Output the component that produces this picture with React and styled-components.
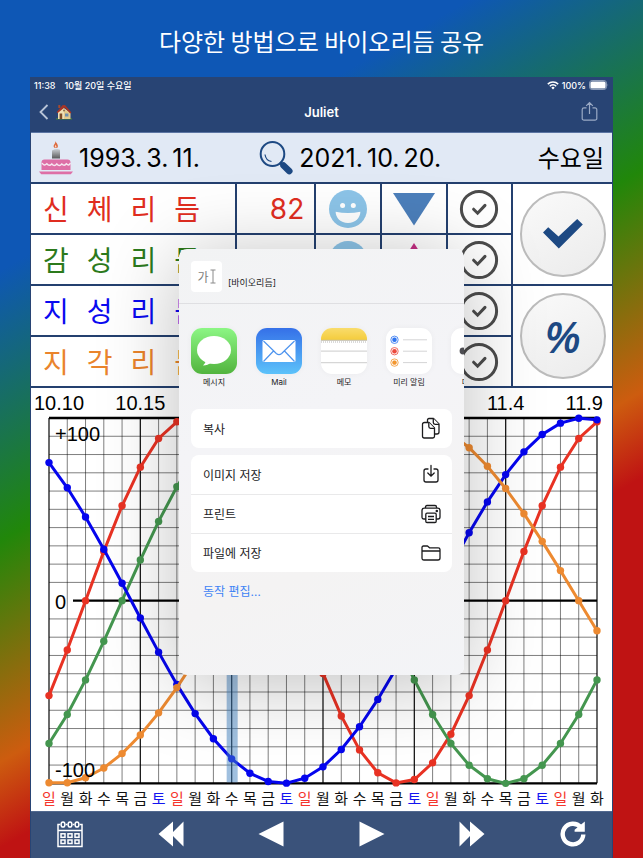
import React, { useState } from "react";
import styled, { createGlobalStyle } from "styled-components";

const NAVY = "#284474";
const LINE = "#24406f";

const GlobalStyle = createGlobalStyle`
  * {
    box-sizing: border-box;
  }
  body {
    margin: 0;
    font-family: Inter, "Noto Sans CJK KR", sans-serif;
    color: #000;
  }
  button {
    padding: 0;
    border: 0;
    background: none;
    font: inherit;
    color: inherit;
    cursor: pointer;
  }
  svg {
    display: block;
  }
`;

const Page = styled.main`
  min-height: 100vh;
  padding: 0 30px;
  background: linear-gradient(
    150deg,
    #0e57b5 22%,
    #21870a 44%,
    #cd5c0f 62%,
    #bf1313 69%
  );
`;
const Headline = styled.h1`
  margin: 0;
  padding-top: 4px;
  height: 77px;
  display: flex;
  align-items: center;
  justify-content: center;
  font-family: "Noto Sans CJK KR", sans-serif;
  font-size: 24px;
  font-weight: 400;
  color: #fff;
`;
const Screen = styled.section`
  position: relative;
  border: 1px solid ${NAVY};
  border-width: 0 1px;
  background: #fff;
  overflow: hidden;
`;
const StatusBar = styled.div`
  display: flex;
  align-items: center;
  justify-content: space-between;
  height: 16px;
  padding: 0 3px;
  background: ${NAVY};
  color: #fff;
  font-size: 9px;
  font-weight: 500;
`;
const StatusGroup = styled.div`
  display: flex;
  align-items: center;
  gap: ${(p) => p.$gap}px;
`;
const NavBar = styled.header`
  display: grid;
  grid-template-columns: 1fr auto 1fr;
  align-items: center;
  height: 40px;
  padding: 0 14px 2px 8px;
  background: ${NAVY};
  border-bottom: 1px solid #5b75a3;
`;
const NavTitle = styled.h2`
  margin: 0;
  padding-left: 6px;
  font-size: 13px;
  font-weight: 600;
  color: #fff;
`;
const BackButton = styled.button`
  display: flex;
  align-items: center;
  gap: 7px;
  justify-self: start;
`;
const ShareButton = styled.button`
  justify-self: end;
`;
const DateRow = styled.div`
  display: flex;
  align-items: center;
  height: 49px;
  padding: 0 8px;
  background: #e1e9f5;
`;
const DateButton = styled.button`
  display: flex;
  align-items: center;
  gap: 6px;
  width: ${(p) => p.$width};
  white-space: nowrap;
`;
const DateText = styled.span`
  display: flex;
  gap: 4px;
  font-size: 25px;
`;
const Weekday = styled.span`
  margin-left: auto;
  padding-bottom: 2px;
  font-family: "Noto Sans CJK KR", sans-serif;
  font-size: 24px;
`;

const RhythmTable = styled.table`
  width: 100%;
  table-layout: fixed;
  border-collapse: separate;
  border-spacing: 0;
  border-top: 2px solid ${LINE};
`;
const Cell = styled.td`
  height: 51px;
  padding: 0;
  border-bottom: 2px solid ${LINE};
  border-right: ${(p) => (p.$last ? "0" : `2px solid ${LINE}`)};
  svg {
    margin: 0 auto;
  }
`;
const NameCell = styled(Cell).attrs({ as: "th", scope: "row" })`
  font-weight: 400;
`;
const RhythmName = styled.div`
  display: flex;
  gap: 18px;
  padding: 0 0 2px 12px;
  font-family: "Noto Sans CJK KR", sans-serif;
  font-size: 28px;
  line-height: 40px;
  color: ${(p) => p.color};
`;
const ValueCell = styled(Cell)`
  padding-right: 10px;
  text-align: right;
  font-size: 28px;
  color: ${(p) => p.color};
`;
const ToggleButton = styled.button`
  display: block;
  margin: 0 auto;
  opacity: ${(p) => (p.$on ? 1 : 0.4)};
`;
const RoundButton = styled.button`
  display: flex;
  align-items: center;
  justify-content: center;
  width: 86px;
  height: 86px;
  margin: 0 auto;
  border: 2px solid #bcbcbc;
  border-radius: 50%;
  background: linear-gradient(150deg, #fafafa, #ebebeb);
  font-family: "Open Sans", sans-serif;
  font-size: 44px;
  font-style: italic;
  font-weight: 600;
  line-height: 1;
  color: #1d4983;
`;
const ChartSvg = styled.svg`
  width: 100%;
  height: auto;
  font-family: "Liberation Sans", "Noto Sans CJK KR", sans-serif;
  font-size: 20px;
`;
const DayText = styled.text`
  font-family: "Noto Sans CJK KR", sans-serif;
  font-size: 15px;
`;

const Toolbar = styled.nav`
  display: flex;
  align-items: center;
  justify-content: space-between;
  height: 47px;
  margin: 0 -1px;
  padding: 0 27px 2px;
  background: #3a527a;
  border-top: 1px solid #52698f;
`;

const Sheet = styled.div`
  position: absolute;
  top: 172px;
  left: 0;
  right: 0;
  width: 285px;
  height: 426px;
  margin: 0 auto;
  border-radius: 8px;
  background: linear-gradient(160deg, #f2f3f4, #f4f4f7 40%, #f4f3f3 70%, #f3f4f7);
  box-shadow: 0 8px 80px rgba(0, 0, 0, 0.26);
  overflow: hidden;
  color: #1c1c1e;
`;
const SheetHeader = styled.div`
  display: flex;
  align-items: center;
  gap: 6px;
  height: 55px;
  padding: 0 12px;
  border-bottom: 1px solid #dfdfe2;
`;
const Preview = styled.div`
  display: flex;
  align-items: center;
  justify-content: center;
  gap: 1px;
  width: 31px;
  height: 31px;
  border-radius: 4px;
  background: #fff;
  font-size: 12px;
  color: #7d7d7d;
`;
const SheetTitle = styled.span`
  padding-top: 12px;
  font-size: 9px;
`;
const Apps = styled.div`
  display: flex;
  gap: 19px;
  padding: 24px 0 0 12px;
`;
const AppButton = styled.button`
  flex: 0 0 auto;
  width: 46px;
  font-size: 8px;
  line-height: 16px;
  white-space: nowrap;
`;
const AppTile = styled.span`
  display: block;
  width: 46px;
  height: 46px;
  border-radius: 11px;
  overflow: hidden;
  background: #fff;
  box-shadow: 0 0 6px rgba(0, 0, 0, 0.04);
`;
const ActionGroup = styled.div`
  margin: ${(p) => p.$top}px 12px 0;
  border-radius: 8px;
  background: #fff;
  overflow: hidden;
`;
const Action = styled.button`
  display: flex;
  align-items: center;
  justify-content: space-between;
  width: 100%;
  height: 39px;
  padding: 0 11px 1px 12px;
  font-size: 12px;
  & + & {
    border-top: 1px solid #e9e9ea;
  }
`;
const EditLink = styled.a`
  display: block;
  width: max-content;
  margin: 10px 24px;
  font-size: 12px;
  line-height: 20px;
  color: #3f83f5;
  text-decoration: none;
`;

const rhythms = [
  { name: "신체리듬", color: "#e02d20", stroke: "#e83223", period: 23, phase: -2, up: false },
  { name: "감성리듬", color: "#2c7a1c", stroke: "#44964f", period: 28, phase: -4, up: true },
  { name: "지성리듬", color: "#0a0af0", stroke: "#0505ee", period: 33, phase: 12, up: false },
  { name: "지각리듬", color: "#ea842c", stroke: "#ed8a31", period: 38, phase: 28, up: true },
];

const TODAY = 10;
const levelAt = (r, day) => Math.sin((2 * Math.PI * (day + r.phase)) / r.period);

/* icons */
const Wifi = () => (
  <svg width="12" height="9" viewBox="0 0 12 9" fill="none" stroke="#fff" strokeWidth="1.5">
    <path d="M.8 3.1a7.4 7.4 0 0 1 10.4 0" />
    <path d="M2.8 5.2a4.5 4.5 0 0 1 6.4 0" />
    <path d="M4.3 6.7a2.4 2.4 0 0 1 3.4 0L6 8.4z" fill="#fff" stroke="none" />
  </svg>
);
const Battery = () => (
  <svg width="20" height="10" viewBox="0 0 20 10">
    <rect x=".5" y=".5" width="17" height="9" rx="2.6" fill="none" stroke="#8b9bb8" />
    <rect x="1.4" y="1.4" width="15.2" height="7.2" rx="1.6" fill="#fff" />
    <path d="M18.6 3.4q1.2 1.6 0 3.2z" fill="#8b9bb8" />
  </svg>
);
const House = () => (
  <svg width="16" height="16" viewBox="0 0 16 16">
    <path d="M0 14.4h16v1H0z" fill="#4c8a33" />
    <path d="M2 8l5-4.6L13.5 8v7H2z" fill="#f0dfb4" />
    <path d="M8 5l6.5 4v6H8z" fill="#e3c98d" />
    <path d="M2.3 1h2v3h-2z" fill="#a5492f" />
    <path d="M.6 8.2L6.5 1.3 9 1l6.4 7.6-1.2.8L8.6 3.6 1.7 9z" fill="#a83425" />
    <path d="M3.6 9.5h2.6V15H3.6z" fill="#7d4a26" />
    <path d="M9 9.5h3.4v3H9z" fill="#6f8fae" />
    <circle cx="8" cy="6.6" r="1" fill="#8a6a4a" />
  </svg>
);
const Share = () => (
  <svg width="17" height="21" viewBox="0 0 17 21" fill="none" stroke="#9aaac5" strokeWidth="1.2">
    <path d="M5.5 6.8H3A1.8 1.8 0 0 0 1.2 8.6v8.8A1.8 1.8 0 0 0 3 19.2h11a1.8 1.8 0 0 0 1.8-1.8V8.6A1.8 1.8 0 0 0 14 6.8h-2.5M8.5 13V1.5M5.2 4.8l3.3-3.3 3.3 3.3" />
  </svg>
);
const Cake = () => (
  <svg width="34" height="36" viewBox="0 0 34 36">
    <defs>
      <linearGradient id="candle" x1="0" y1="0" x2="0" y2="1">
        <stop offset="0" stopColor="#c9cdd2" />
        <stop offset="1" stopColor="#5a5a5a" />
      </linearGradient>
    </defs>
    <path d="M16.5 1c.5 2 3 3.5 2.300 6-.4 1.2-3.400 1.2-4 0-.7-2.200 1.600-3 1.700-6z" fill="#dd6a3d" />
    <path d="M16.6 4.5c.2 1 1.1 1.6.8 2.6-.3.5-1.2.5-1.5 0-.3-1 .6-1.5.7-2.6z" fill="#f6d9c8" />
    <path d="M13 10.5q4.5-2.5 8-.8v8.800h-8z" fill="url(#candle)" />
    <path d="M2.5 30V22.5a3 3 0 0 1 3-3h23a3 3 0 0 1 3 3V30z" fill="#de6fa6" />
    <path d="M3 23q2 3.5 4.8.8 2.4 3 5 .2 2.5 3 5 0 2.5 3 5 0 2.5 2.5 4.6-.2 2.5 2.8 4-.8" fill="none" stroke="#f6e6f0" strokeWidth="1.5" />
    <path d="M0 31.4h34l-2.2 2.9H2.2z" fill="#de6fa6" />
  </svg>
);
const Magnifier = () => (
  <svg width="34" height="34" viewBox="0 0 34 34" fill="none" stroke="#1d4983">
    <ellipse cx="13.5" cy="13" rx="11.8" ry="12" strokeWidth="2" />
    <path d="M6 13.5q.8 6 6.5 7" strokeWidth="1.2" />
    <path d="M21 21.5l4 3.5" strokeWidth="3" />
    <path d="M24.5 24.5l5.8 5.6" strokeWidth="6.5" strokeLinecap="round" />
  </svg>
);
const Smile = () => (
  <svg width="38" height="38" viewBox="0 0 38 38">
    <circle cx="19" cy="19" r="19" fill="#8cc4e8" />
    <circle cx="13.6" cy="15.5" r="2.5" fill="#fff" />
    <circle cx="24.3" cy="15.5" r="2.5" fill="#fff" />
    <path d="M6.6 21.8q12.4 2.4 24.8 0C31.2 28 26.5 33 19 33S6.8 28 6.6 21.8z" fill="#fff" />
  </svg>
);
const Trend = ({ up }) => (
  <svg width="42" height="34" viewBox="0 0 42 34">
    {up ? (
      <path d="M21 0l21 33H0z" fill="#c42f83" />
    ) : (
      <path d="M0 1h42L21 33.5z" fill="#4c7fbb" />
    )}
  </svg>
);
const CircleCheck = () => (
  <svg width="40" height="40" viewBox="0 0 40 40" fill="none" stroke="#4c4c4c">
    <circle cx="20" cy="20" r="17.6" strokeWidth="3" />
    <path d="M14.6 20.2l4 4 7.4-7.8" strokeWidth="3" strokeLinecap="round" />
  </svg>
);
const BigCheck = () => (
  <svg width="40" height="30" viewBox="0 0 40 30">
    <path d="M0 13.5L5.2 8.2 15.5 17.6 34.2 0l5.6 5.400L15.8 29.5z" fill="#1d4983" />
  </svg>
);
const Calendar = () => (
  <svg width="26" height="27" viewBox="0 0 26 27" fill="none" stroke="#fff" strokeWidth="1.5">
    <path d="M3.2 3.5H1v22h24v-22h-2.2M8.8 3.5h1.6M15.8 3.5h1.6M1 9.5h24" />
    {[6, 13, 20].map((x) => (
      <g key={x}>
        <ellipse cx={x} cy="3.5" rx="1.9" ry="2.6" />
        <rect x={x - 2} y="12.8" width="4" height="3.5" />
        <rect x={x - 2} y="19" width="4" height="3.5" />
      </g>
    ))}
  </svg>
);
const Arrow = ({ back, double }) => (
  <svg width="26" height="26" viewBox="0 0 26 26" fill="#fff">
    <path
      transform={back ? "matrix(-1 0 0 1 26 0)" : undefined}
      d={double ? "M.5.5L11 11V.5L25.5 13 11 25.5V15L.5 25.5z" : "M.5.5L25.5 13 .5 25.5z"}
    />
  </svg>
);
const Reload = () => (
  <svg width="26" height="26" viewBox="0 0 26 26">
    <path d="M20.8 6.3A10.3 10.3 0 1 0 23.3 13.5" fill="none" stroke="#fff" strokeWidth="4.4" />
    <path d="M24.8.5v10.2H14.6V8.8z" fill="#fff" />
  </svg>
);
const TextCursor = () => (
  <svg width="6" height="15" viewBox="0 0 6 15" fill="none" stroke="#8a8a8a">
    <path d="M.5 1h5M.5 14h5M3 1v13" />
  </svg>
);
const CopyIcon = () => (
  <svg width="20" height="22" viewBox="0 0 20 22" fill="#fff" stroke="#1c1c1e" strokeWidth="1.3" strokeLinejoin="round">
    <path d="M8 1.5h4.500l5.500 5.500v8q0 2-2 2H8q-1.500 0-1.500-1.500V3Q6.500 1.500 8 1.500z" />
    <path d="M12.3 1.5v4q0 1.800 1.800 1.800H18" />
    <path d="M3.5 5.5H8l5.500 5.500v8.300q0 1.700-1.700 1.700H3.200q-1.700 0-1.700-1.700V7.200q0-1.700 2-1.700z" />
    <path d="M7.8 5.5v4q0 1.800 1.800 1.800h3.900" />
  </svg>
);
const SaveIcon = () => (
  <svg width="20" height="20" viewBox="0 0 20 20" fill="none" stroke="#1c1c1e" strokeWidth="1.3" strokeLinecap="round">
    <path d="M7 5H5Q3 5 3 7v9q0 2 2 2h10q2 0 2-2V7q0-2-2-2h-2M10 1.5v10.500M6.800 9l3.200 3.200L13.200 9" />
  </svg>
);
const PrintIcon = () => (
  <svg width="20" height="20" viewBox="0 0 20 20" fill="none" stroke="#1c1c1e" strokeWidth="1.3" strokeLinejoin="round">
    <path d="M4.500 4V3q0-1.500 1.500-1.500h8q1.500 0 1.500 1.500v1M4.800 15H3q-2 0-2-2V6.500q0-2.300 2.300-2.300h13.400q2.300 0 2.300 2.300V13q0 2-2 2h-1.800" />
    <rect x="4.8" y="9.2" width="10.4" height="9.3" rx="1.2" />
    <path d="M7 12.5h6M7 15.3h6" />
    <circle cx="15.8" cy="7" r=".6" fill="#1c1c1e" />
  </svg>
);
const FolderIcon = () => (
  <svg width="20" height="18" viewBox="0 0 20 18" fill="none" stroke="#1c1c1e" strokeWidth="1.3" strokeLinejoin="round">
    <path d="M1 14V3.500Q1 2 2.500 2h4l2 1.800h8.700q1.800 0 1.800 1.700V14q0 2-2 2H3q-2 0-2-2zM1 7h18" />
  </svg>
);

const MessagesArt = () => (
  <svg width="46" height="46" viewBox="0 0 46 46">
    <defs>
      <linearGradient id="msg" x1="0" y1="0" x2="0" y2="1">
        <stop offset="0" stopColor="#8cf684" />
        <stop offset="1" stopColor="#52b43e" />
      </linearGradient>
    </defs>
    <path fill="url(#msg)" d="M0 0h46v46H0z" />
    <ellipse cx="23" cy="22" rx="17" ry="14" fill="#fff" />
    <path d="M15 32q-.5 3.600-3 5.500 5 0 8-3z" fill="#fff" />
  </svg>
);
const MailArt = () => (
  <svg width="46" height="46" viewBox="0 0 46 46">
    <defs>
      <linearGradient id="mail" x1="0" y1="0" x2="0" y2="1">
        <stop offset="0" stopColor="#3570e8" />
        <stop offset="1" stopColor="#5cc2fa" />
      </linearGradient>
    </defs>
    <path fill="url(#mail)" d="M0 0h46v46H0z" />
    <rect x="6.5" y="12" width="33" height="22" rx="1.5" fill="#fff" />
    <path d="M7.500 13l9.800 9.500 3 3q2.700 2.400 5.400 0l3-3L38.500 13M7.500 33.500L17.500 23M38.500 33.500L28.500 23" fill="none" stroke="#4e94ee" strokeWidth="1.2" />
  </svg>
);
const NotesArt = () => (
  <svg width="46" height="46" viewBox="0 0 46 46">
    <defs>
      <linearGradient id="note" x1="0" y1="0" x2="0" y2="1">
        <stop offset="0" stopColor="#f9dc6c" />
        <stop offset="1" stopColor="#f4cc3c" />
      </linearGradient>
    </defs>
    <path fill="url(#note)" d="M0 0h46v12H0z" />
    <path d="M0 12.3h46" stroke="#c3bda9" />
    <path d="M0 14h46" stroke="#b5b5b5" strokeDasharray="1 1" />
    <path d="M0 23.2h46M0 34.7h46" stroke="#d6d6d6" strokeWidth="1.3" />
  </svg>
);
const RemindersArt = () => (
  <svg width="46" height="46" viewBox="0 0 46 46">
    {["#2f75f0", "#ec4a3e", "#f2962f"].map((c, i) => (
      <g key={c} stroke={c}>
        <circle cx="8.5" cy={11.8 + i * 11.4} r="3.7" fill="none" strokeWidth=".8" />
        <circle cx="8.5" cy={11.8 + i * 11.4} r="2.2" fill={c} strokeWidth=".2" />
        <path d={`M17 ${11.8 + i * 11.4}h24`} stroke="#d4d4d6" />
      </g>
    ))}
  </svg>
);
const MoreArt = () => (
  <svg width="46" height="46" viewBox="0 0 46 46" fill="#4d4d52">
    <circle cx="12" cy="23" r="3.4" />
    <circle cx="23" cy="23" r="3.4" />
    <circle cx="34" cy="23" r="3.4" />
  </svg>
);

const apps = [
  { label: "메시지", art: <MessagesArt /> },
  { label: "Mail", art: <MailArt /> },
  { label: "메모", art: <NotesArt /> },
  { label: "미리 알림", art: <RemindersArt /> },
  { label: "더 보기", art: <MoreArt /> },
];

const DAYS = 30;
const LEFT = 18;
const TOP = 30;
const STEP = 548 / DAYS;
const MID = TOP + STEP * 10;
const BOTTOM = TOP + STEP * 20;
const range = (n) => Array.from({ length: n }, (_, i) => i);
const xAt = (day) => LEFT + day * STEP;

const week = ["일", "월", "화", "수", "목", "금", "토"];
const dayColor = (day) => {
  if (day % 7 === 0) return "#f5352c";
  if (day % 7 === 6) return "#1414f0";
  return "#111";
};

const Curve = ({ rhythm }) => {
  const points = range(DAYS + 1).map((d) => [
    xAt(d),
    MID - levelAt(rhythm, d) * STEP * 10,
  ]);
  return (
    <g fill={rhythm.stroke}>
      <polyline
        points={points.map((p) => p.join(",")).join(" ")}
        fill="none"
        stroke={rhythm.stroke}
        strokeWidth="3"
      />
      {points.map(([x, y]) => (
        <circle key={x} cx={x} cy={y} r="3.7" />
      ))}
    </g>
  );
};

const Chart = ({ visible }) => (
  <ChartSvg viewBox="0 0 581 423" role="img" aria-label="바이오리듬">
    <g stroke="#000">
      {range(DAYS + 1).map((d) => (
        <path
          key={d}
          d={`M${xAt(d)} ${TOP}V${BOTTOM}`}
          strokeWidth={d % 5 === 0 ? 1.3 : 1}
          strokeOpacity={d % 5 === 0 ? 0.9 : 0.5}
        />
      ))}
      {range(21).map((r) => (
        <path key={r} d={`M${LEFT} ${TOP + r * STEP}H${xAt(DAYS)}`} strokeOpacity={r === 10 ? 0 : 0.5} />
      ))}
      <path
        d={`M${LEFT} ${TOP}H${xAt(DAYS)}M42 ${MID}H${xAt(DAYS)}M${LEFT} ${BOTTOM}H${xAt(DAYS)}`}
        strokeWidth="2.4"
      />
    </g>
    <text x="3" y="22">10.10</text>
    <text x={xAt(5)} y="22" textAnchor="middle">10.15</text>
    <text x={xAt(25)} y="22" textAnchor="middle">11.4</text>
    <text x="572" y="22" textAnchor="end">11.9</text>
    {rhythms.map((r, i) => visible[i] && <Curve key={r.name} rhythm={r} />)}
    <text x="24" y="53">+100</text>
    <text x="24" y="221">0</text>
    <text x="24" y="389">-100</text>
    <rect x={xAt(TODAY) - 5} y={TOP} width="11" height={BOTTOM - TOP - 1} fill="#4282c0" fillOpacity=".5" />
    {range(DAYS + 1).map((d) => (
      <DayText key={d} x={xAt(d)} y="416" textAnchor="middle" fill={dayColor(d)}>
        {week[d % 7]}
      </DayText>
    ))}
  </ChartSvg>
);

const DateLabel = ({ parts }) => (
  <DateText>
    {parts.map((part, i) => (
      <span key={i}>{part}.</span>
    ))}
  </DateText>
);

const ShareSheet = () => (
  <Sheet role="dialog" aria-label="공유">
    <SheetHeader>
      <Preview>
        <span>가</span>
        <TextCursor />
      </Preview>
      <SheetTitle>[바이오리듬]</SheetTitle>
    </SheetHeader>
    <Apps>
      {apps.map((app) => (
        <AppButton key={app.label}>
          <AppTile>{app.art}</AppTile>
          {app.label}
        </AppButton>
      ))}
    </Apps>
    <ActionGroup $top={19}>
      <Action>
        복사
        <CopyIcon />
      </Action>
    </ActionGroup>
    <ActionGroup $top={7}>
      <Action>
        이미지 저장
        <SaveIcon />
      </Action>
      <Action>
        프린트
        <PrintIcon />
      </Action>
      <Action>
        파일에 저장
        <FolderIcon />
      </Action>
    </ActionGroup>
    <EditLink href="#edit">동작 편집…</EditLink>
  </Sheet>
);

const App = () => {
  const [visible, setVisible] = useState([true, true, true, true]);

  const toggle = (index) => {
    setVisible(visible.map((v, i) => (i === index ? !v : v)));
  };

  return (
    <>
      <GlobalStyle />
      <Page>
        <Headline>다양한 방법으로 바이오리듬 공유</Headline>
        <Screen>
          <StatusBar>
            <StatusGroup $gap={9}>
              <span>11:38</span>
              <span>10월 20일 수요일</span>
            </StatusGroup>
            <StatusGroup $gap={3}>
              <Wifi />
              <span>100%</span>
              <Battery />
            </StatusGroup>
          </StatusBar>
          <NavBar>
            <BackButton aria-label="홈">
              <svg width="10" height="16" viewBox="0 0 10 16" fill="none" stroke="#b9c5d8" strokeWidth="1.8">
                <path d="M8.5 1L1.5 8l7 7" />
              </svg>
              <House />
            </BackButton>
            <NavTitle>Juliet</NavTitle>
            <ShareButton aria-label="공유">
              <Share />
            </ShareButton>
          </NavBar>
          <DateRow>
            <DateButton $width="39%">
              <Cake />
              <DateLabel parts={["1993", "3", "11"]} />
            </DateButton>
            <DateButton $width="auto">
              <Magnifier />
              <DateLabel parts={["2021", "10", "20"]} />
            </DateButton>
            <Weekday>수요일</Weekday>
          </DateRow>

          <RhythmTable>
            <colgroup>
              <col style={{ width: "35.5%" }} />
              <col style={{ width: "13.6%" }} />
              <col style={{ width: "11.3%" }} />
              <col style={{ width: "11.3%" }} />
              <col style={{ width: "11.3%" }} />
              <col />
            </colgroup>
            <tbody>
              {rhythms.map((r, i) => (
                <tr key={r.name}>
                  <NameCell>
                    <RhythmName color={r.color}>
                      {r.name.split("").map((c) => (
                        <span key={c}>{c}</span>
                      ))}
                    </RhythmName>
                  </NameCell>
                  <ValueCell color={r.color}>
                    {Math.round(levelAt(r, TODAY) * 100) || 0}
                  </ValueCell>
                  <Cell>
                    <Smile />
                  </Cell>
                  <Cell>
                    <Trend up={r.up} />
                  </Cell>
                  <Cell>
                    <ToggleButton $on={visible[i]} aria-label={r.name} onClick={() => toggle(i)}>
                      <CircleCheck />
                    </ToggleButton>
                  </Cell>
                  {i === 0 && (
                    <Cell $last rowSpan={2}>
                      <RoundButton aria-label="모두 선택" onClick={() => setVisible([true, true, true, true])}>
                        <BigCheck />
                      </RoundButton>
                    </Cell>
                  )}
                  {i === 2 && (
                    <Cell $last rowSpan={2}>
                      <RoundButton>%</RoundButton>
                    </Cell>
                  )}
                </tr>
              ))}
            </tbody>
          </RhythmTable>

          <Chart visible={visible} />

          <Toolbar>
            <button aria-label="달력"><Calendar /></button>
            <button aria-label="이전 달"><Arrow back double /></button>
            <button aria-label="이전"><Arrow back /></button>
            <button aria-label="다음"><Arrow /></button>
            <button aria-label="다음 달"><Arrow double /></button>
            <button aria-label="새로 고침"><Reload /></button>
          </Toolbar>

          <ShareSheet />
        </Screen>
      </Page>
    </>
  );
};

export default App;
